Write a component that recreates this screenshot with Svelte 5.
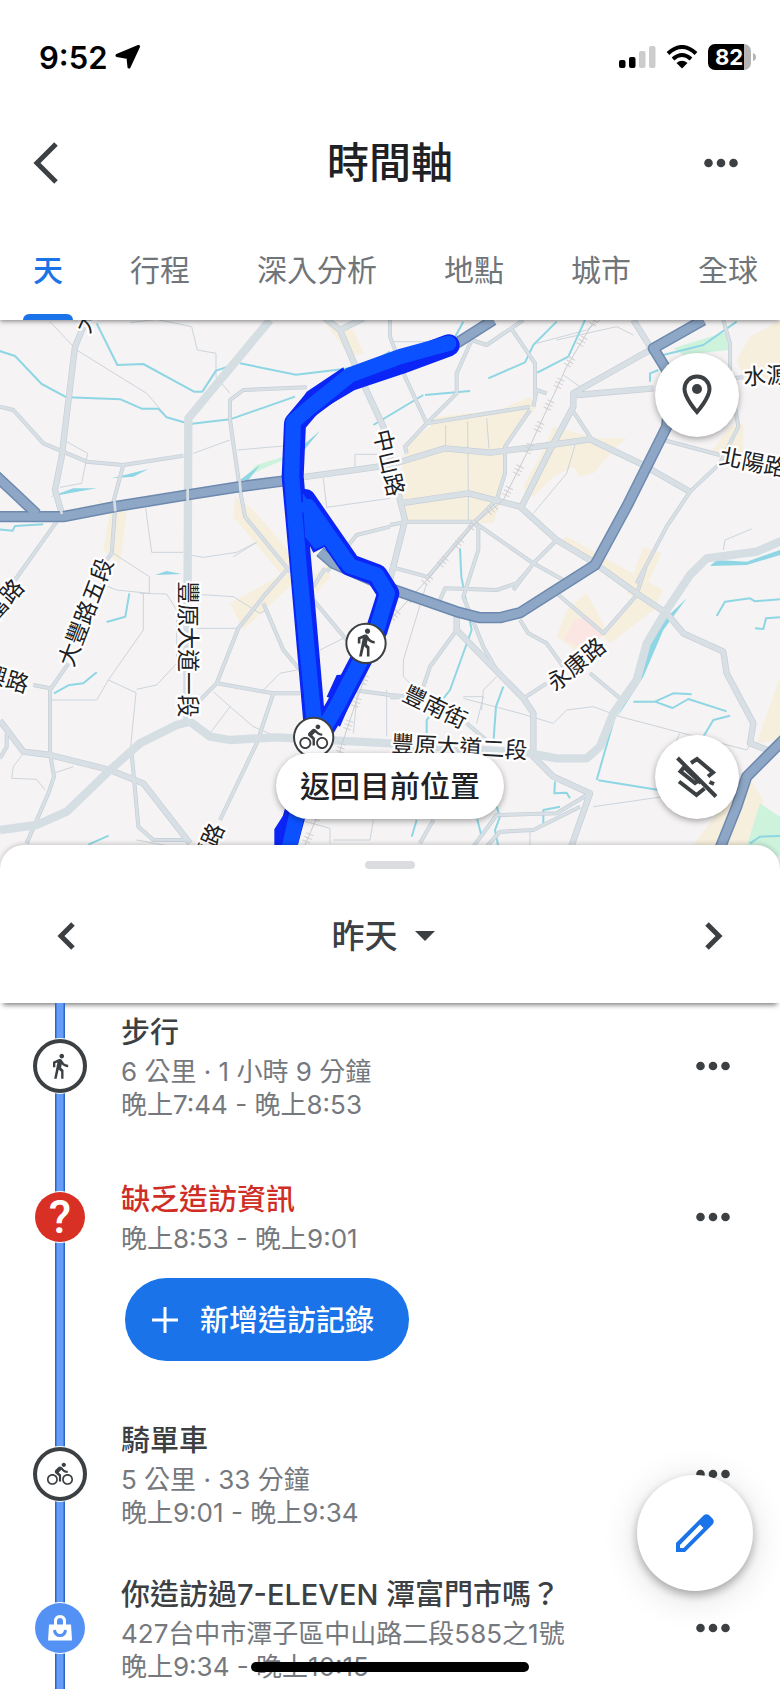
<script lang="ts">
	const tabs = ['天', '行程', '深入分析', '地點', '城市', '全球'];
	let activeTab = $state('天');

	type Entry = { kind: string; title: string; lines: string[] };

	const entries: Entry[] = [
		{ kind: 'walk', title: '步行', lines: ['6 公里 · 1 小時 9 分鐘', '晚上7:44 - 晚上8:53'] },
		{ kind: 'missing', title: '缺乏造訪資訊', lines: ['晚上8:53 - 晚上9:01'] },
		{ kind: 'bike', title: '騎單車', lines: ['5 公里 · 33 分鐘', '晚上9:01 - 晚上9:34'] },
		{
			kind: 'shop',
			title: '你造訪過7-ELEVEN 潭富門市嗎？',
			lines: ['427台中市潭子區中山路二段585之1號', '晚上9:34 - 晚上10:15']
		}
	];

	const walkIcon =
		'M13.5 5.5c1.1 0 2-.9 2-2s-.9-2-2-2-2 .9-2 2 .9 2 2 2zM9.8 8.9L7 23h2.1l1.8-8 2.1 2v6h2v-7.5l-2.1-2 .6-3C14.8 12 16.8 13 19 13v-2c-1.9 0-3.5-1-4.3-2.4l-1-1.6c-.4-.6-1-1-1.7-1-.3 0-.5.1-.8.1L6 8.3V13h2V9.6l1.8-.7';
	const bikeIcon =
		'M15.5 5.5c1.1 0 2-.9 2-2s-.9-2-2-2-2 .9-2 2 .9 2 2 2zM5 12c-2.8 0-5 2.2-5 5s2.2 5 5 5 5-2.2 5-5-2.2-5-5-5zm0 8.5c-1.9 0-3.5-1.6-3.5-3.5s1.6-3.5 3.5-3.5 3.5 1.6 3.5 3.5-1.6 3.5-3.5 3.5zm5.8-10l2.4-2.4.8.8c1.3 1.3 3 2.1 5.1 2.1V9c-1.5 0-2.7-.6-3.6-1.5l-1.9-1.9c-.5-.4-1-.6-1.6-.6s-1.1.2-1.4.6L7.8 8.4c-.4.4-.6.9-.6 1.4 0 .6.2 1.1.6 1.4L11 14v5h2v-6.2l-2.2-2.3zM19 12c-2.8 0-5 2.2-5 5s2.2 5 5 5 5-2.2 5-5-2.2-5-5-5zm0 8.5c-1.9 0-3.5-1.6-3.5-3.5s1.6-3.5 3.5-3.5 3.5 1.6 3.5 3.5-1.6 3.5-3.5 3.5z';

	// built-up areas
	const blocks = [
		'M1310 320L1500 300L1590 260L1610 290L1520 400L1500 580L1480 640L1220 640L1200 560L1210 440L1230 390L1290 350Z',
		'M1660 350L1790 385L1880 385L1840 420L1780 490L1740 500L1720 470L1660 500L1600 560L1570 530L1630 420Z',
		'M2250 80L2340 30V210L2230 200L2210 150Z',
		'M2190 350L2230 340V450L2180 460L2130 430Z',
		'M1700 900L1760 850L1820 960L1740 1030L1670 980Z',
		'M1700 680L1990 840L1960 900L1830 1000L1810 980L1920 850L1670 700Z',
		'M1930 710L1985 730L1920 870L1880 850Z',
		'M285 565L380 610L360 760L310 720L330 610Z',
		'M705 560L760 600L900 760L850 800L700 620Z',
		'M870 780L900 800L730 960L690 880Z',
		'M980 760L990 800L950 850L930 810Z',
		'M970 30L1060 60L1090 130L1050 140Z',
		'M2340 1100L2270 1300L2340 1290ZM2240 1390L2290 1470L2240 1620H2070Z'
	];

	const parks = [
		'M2020 115L2180 65L2185 120L2050 135Z',
		'M2280 1480L2340 1520V1640H2230Z',
		'M720 515L770 465L850 440L850 450L780 480Z'
	];

	const waters = [
		'M335 505L445 477L400 500ZM150 560L220 535L290 535ZM465 795L500 783L545 792ZM720 510L780 465L745 510ZM905 430L910 405L960 362Z',
		'M2130 768L2150 750L2240 755L2340 720V735L2240 765Z',
		'M2060 865L1990 960L1930 1100L1850 1225L1900 1130L1930 1010L1960 960Z'
	];

	const streams = [
		'M-10 120L45 138L125 222L200 262L362 268L425 296H475L500 322L570 342L690 328L885 260',
		'M290 40L352 165L430 162L582 245H607L648 182L700 165',
		'M720 160L888 194L1050 175L1110 160L1170 125',
		'M-10 658L38 662L45 648L130 643',
		'M388 850L376 920L320 936M162 1150L205 1126L250 1120L290 1087M265 1604L326 1577',
		'M1120 345L1170 315L1270 255M1275 255L1410 243',
		'M1465 205L1575 157L1600 105L1670 35M1612 188L1705 140L1755 30M1360 90L1390 35',
		'M1990 135L2110 105L2210 35M1950 215V190L1975 180',
		'M1380 715L1384 800L1415 960L1350 1140L1280 1230V1270',
		'M1510 1130L1488 1190L1480 1300',
		'M2150 918L2175 875L2250 865L2265 874L2340 868M2265 955L2290 957L2298 925L2340 922',
		'M1900 1175H1965L2020 1150L2075 1153M1965 1175L2018 1194L2065 1167L2180 1204M2110 1280L2140 1230L2190 1217',
		'M1840 1235L1790 1410M1795 1411L1990 1442M1665 1415L1663 1450L1700 1448L1710 1465',
		'M1630 1540V1500L1680 1490M1430 1520L1445 1580M1490 1490L1500 1520L1485 1560L1495 1610M1250 1530L1235 1580',
		'M2250 1600L2280 1580L2340 1578'
	];

	const lanes = [
		'M150 35L230 120L440 250L500 320M390 38L470 28L575 50L592 120L648 130V200L690 250',
		'M200 395L263 430L245 520L180 532M437 595L455 727H550M575 736L610 742L710 727L770 697L700 740',
		'M580 430L690 390M712 420L850 408M970 505L980 592L1170 565M1065 470V433H1170',
		'M340 730L448 800V850L350 840L300 820M430 850V960L325 1110L290 1170H150M420 850L500 852L530 900V1060L470 1125L410 1138',
		'M325 1110L408 1148L390 1330M575 852L700 860L780 910L800 900M590 955H715M640 1145L690 1190L760 1250L830 1280M690 1190L630 1270',
		'M70 1330L40 1370L35 1405L110 1408L135 1440M160 1390L220 1370M790 1140L840 1090L890 1080M960 1020L1030 985',
		'M1075 1120L1060 1270M1160 1140V1280M900 1530L990 1555V1600M1120 1530L1110 1590L1000 1590M410 1590L570 1620',
		'M1337 345V410M1403 335L1405 560M1460 325L1467 415M1405 560V635M1725 405L1700 490L1600 610M1690 195L1740 230',
		'M1170 95H1280M1610 100L1760 60L1800 30M2170 720L2175 690L2255 657M1670 90L1850 50L1900 75',
		'M1280 820L1210 1050L1210 1100L1240 1130M1390 1160H1450L1430 1240M1390 1165L1560 1210L1660 1240L1700 1200L1780 1190L1860 1220L2240 1320L2260 1290',
		'M1490 1100L1450 1140L1445 1200M1780 1490L1990 1460M1590 1560V1620M2040 1270L2020 1310'
	];

	const minorRoads = [
		'M0 290L40 300L130 400L260 455L370 465L550 437M370 465L340 575M345 600L335 730L320 750M170 635L45 810',
		'M920 232L730 240L690 270V330L720 540L735 620L870 785M1170 650L1070 675L980 785',
		'M205 1060L150 1140V1330L162 1400L145 1450L80 1600M100 1125L150 1135M20 1270V1310L0 1345',
		'M860 780L790 860L715 955L650 1120L590 1180M650 1120L820 1150L900 1150M1060 1140L1170 1155L1230 1160',
		'M790 880L850 1020L900 1080M820 1150L770 1300L660 1530M940 870L1040 990M975 775L940 830M395 1330L415 1550L460 1590H570',
		'M1280 340L1215 200L1170 80V30M1280 340L1370 250V190L1415 90L1460 105L1570 30M1530 50L1605 160V270',
		'M1590 290L1280 340L1215 410L1220 430M1590 300L1515 410V490L1490 570L1420 640L1280 805M1600 290L1610 240L1640 250',
		'M1220 635H1420L1600 760L1690 810M1170 645L1220 635M1600 760L1670 690M1600 760L1540 840M1435 650V720L1390 860L1450 1010L1490 1080',
		'M1170 770L1280 800M1720 305L1775 388M1990 390L2160 435M2170 30L2190 100V200L2215 350L2160 460L2070 545L2000 650L1910 820',
		'M1320 870L1335 835L1490 840L1550 820L1590 775M1560 930L1585 970L1640 1000L1690 1070M1670 850L1810 970L1910 855L1935 775',
		'M1770 1090L1860 1165M1570 1165L1640 1120M1370 960L1290 1070L1270 1130M1400 1240L1470 1300',
		'M1770 1450L1670 1510L1490 1515L1420 1610M1740 1490L1600 1560L1500 1565L1460 1610M1170 1162H1240M2190 205L2230 202',
		'M1300 1530L1260 1600'
	];

	const roads = [
		'M250 50L225 110L185 440L165 540L185 610',
		'M1020 60L1080 200L1150 350L1200 570L1215 630L1170 810M970 20L1020 60L1090 25',
		'M1200 580L1405 550L1560 590L1670 690L1770 750L1910 850L2000 910L2050 970L2170 1025L2180 1090L2260 1240L2250 1300L2330 1330',
		'M900 503L1170 465L1335 415L1470 428L1650 405L1770 388L1920 460L2070 545',
		'M1950 120L1720 250V290L1650 420L1565 590M1730 255L1960 235M1950 110L1900 30',
		'M1370 920V960L1570 1165L1600 1210V1340L1660 1400L1770 1450L1710 1620',
		'M0 1232L70 1325L150 1335L330 1380L430 1420L570 1600'
	];

	const mainRoads = [
		'M810 30L565 325L563 780L562 1230',
		'M0 1560L110 1545L200 1505L330 1380L420 1300L530 1245L570 1235L630 1280L690 1290L830 1282L1170 1300L1590 1330L1670 1345H1760L1800 1310L1840 1210L1910 1110L1940 1000L2000 900L2070 795L2120 745L2270 725L2350 690'
	];

	const highways = [
		'M-10 620H190L345 590L560 555L720 530L850 513',
		'M-20 490L55 560L110 612',
		'M960 725L1000 760L1170 835L1370 905L1440 923H1500L1560 908L1785 765L1880 590L2000 350L2010 250L2000 180L1960 115L2110 30',
		'M1370 100L1480 30',
		'M2360 1280L2240 1400L2210 1490L2150 1640'
	];

	const railway = 'M1790 20L1700 170L1640 300L1580 430L1510 570L1420 645L1290 800L1170 930L1120 1030L1060 1200L960 1500L900 1640';

	const labels = [
		{ text: '中山路', x: 1168, y: 458, angle: 77 },
		{ text: '豐原大道一段', x: 565, y: 1018, angle: 90 },
		{ text: '大豐路五段', x: 256, y: 906, angle: -69 },
		{ text: '富路', x: 12, y: 868, angle: -48 },
		{ text: '興路', x: 20, y: 1105, angle: 17 },
		{ text: '潭路', x: 624, y: 1605, angle: -66 },
		{ text: '大', x: 258, y: 32, angle: -65 },
		{ text: '水源路', x: 2332, y: 194, angle: -3 },
		{ text: '北陽路', x: 2260, y: 456, angle: 11 },
		{ text: '永康路', x: 1728, y: 1062, angle: -40 },
		{ text: '豐南街', x: 1306, y: 1190, angle: 26 },
		{ text: '豐原大道二段', x: 1378, y: 1310, angle: 3 }
	];
</script>

{#snippet dots()}
	<svg class="dots" viewBox="0 0 34 10" aria-hidden="true">
		<circle cx="4.5" cy="5" r="4.3" />
		<circle cx="17" cy="5" r="4.3" />
		<circle cx="29.5" cy="5" r="4.3" />
	</svg>
{/snippet}

<div class="screen">
	<header>
		<div class="status">
			<span class="time">
				9:52
				<svg width="25" height="24" viewBox="0 0 25 24"><path class="arrow" d="M23.500 1.500L14 22L13 12.500L2 10.500Z" /></svg>
			</span>
			<span class="signal">
				<svg width="37" height="24" viewBox="0 0 37 24">
					<rect x="0" y="15" width="6.500" height="8" rx="2" />
					<rect x="10" y="12" width="6.500" height="11" rx="2" />
					<rect class="off" x="20" y="6" width="6.500" height="17" rx="2" />
					<rect class="off" x="30" y="1" width="6.500" height="22" rx="2" />
				</svg>
				<svg width="32" height="24" viewBox="0 0 32 24">
					<path class="wave" d="M2 8.500Q16-4.500 30 8.500M7 14Q16 6 25 14" />
					<path d="M10.500 18Q16 13.500 21.500 18L16 23.500Z" />
				</svg>
				<svg width="48" height="26" viewBox="0 0 48 26">
					<path class="charge-rest" d="M35 0h1a7 7 0 0 1 7 7v12a7 7 0 0 1-7 7h-1zM45 9q3 1 3 4t-3 4z" />
					<path d="M7 0h29v26H7a7 7 0 0 1-7-7V7a7 7 0 0 1 7-7z" />
					<text x="21" y="21" text-anchor="middle">82</text>
				</svg>
			</span>
		</div>

		<div class="titlebar">
			<button aria-label="返回">
				<svg width="26" height="42" viewBox="0 0 26 42"><path class="chevron" d="M23 2L4 21L23 40" /></svg>
			</button>
			<h1>時間軸</h1>
			<button aria-label="更多">{@render dots()}</button>
		</div>

		<nav>
			{#each tabs as tab}
				<button class:active={tab === activeTab} onclick={() => (activeTab = tab)}>{tab}</button>
			{/each}
		</nav>
	</header>

	<section class="map">
		<svg class="canvas" viewBox="0 30 2340 1647" preserveAspectRatio="xMidYMin slice">
			{#each blocks as d}<path class="block" {d} />{/each}
			<path class="clinic" d="M1725 930L1765 915L1815 970L1760 1020L1690 990Z" />
			{#each parks as d}<path class="park" {d} />{/each}
			{#each waters as d}<path class="water" {d} />{/each}
			{#each lanes as d}<path class="lane" {d} />{/each}
			{#each streams as d}<path class="stream" {d} />{/each}
			{#each minorRoads as d}<path class="minor edge" {d} />{/each}
			{#each roads as d}<path class="road edge" {d} />{/each}
			{#each minorRoads as d}<path class="minor" {d} />{/each}
			{#each roads as d}<path class="road" {d} />{/each}
			{#each mainRoads as d}<path class="main" {d} />{/each}
			<path class="rail" d={railway} />
			<path class="ties" d={railway} />
			{#each highways as d}<path class="highway edge" {d} />{/each}
			{#each highways as d}<path class="highway" {d} />{/each}
			<path class="bridge" d="M563 530V590M719 512L722 548M343 570L346 604M178 585L186 612" />

			<path class="route edge" d="M1346 106L1200 160L1050 210L940 275L885 340L878 500L905 800L945 1260M915 570L1050 765L1130 795L1165 850L1130 960L1010 1190L950 1290M893 1480L850 1640" />
			<path class="shade" d="M1030 172L920 245L885 300L930 330L1050 240ZM915 680L940 728L975 710L1000 740L980 640ZM1010 1095L980 1160L993 1165L975 1220L1020 1250L1090 1090ZM860 1500L823 1558V1640H890L900 1500Z" />
			<path class="route-fill" d="M908 550L1050 740L1020 770L975 705L945 718L915 680Z" />
			<path class="route" d="M1346 100L1200 140L1050 195L920 300L880 335L875 500L900 800L945 1260M925 590L1050 768L1130 795L1162 850L1130 960L1010 1190L950 1290M898 1480L862 1640" />

			{#each labels as label}
				<text class="place" x={label.x} y={label.y} transform="rotate({label.angle} {label.x} {label.y})">{label.text}</text>
			{/each}

			<circle class="pin" cx="1098" cy="1000" r="59" />
			<path class="glyph" transform="translate(1050 950) scale(3.9)" d={walkIcon} />
			<circle class="pin" cx="941" cy="1282" r="59" />
			<path class="glyph" transform="translate(898 1238) scale(3.6)" d={bikeIcon} />
		</svg>

		<button class="round places" aria-label="地點">
			<svg width="30" height="42" viewBox="0 0 30 42">
				<path class="outline" d="M15 2.500C8 2.500 2.500 8 2.500 15C2.500 24 15 38 15 38S27.500 24 27.500 15C27.500 8 22 2.500 15 2.500Z" />
				<circle cx="15" cy="15" r="5" />
			</svg>
		</button>
		<button class="return">返回目前位置</button>
		<button class="round layers" aria-label="圖層">
			<svg width="42" height="42" viewBox="0 0 42 42">
				<path class="outline" d="M1.500 2L40 40.500M15 7L21 3L37 16.500L32 20.500M9 10L4.500 15.500L19 27L24 23.500M3 25.500L20.500 39L28.500 32.500M33.500 26L38 28" />
				<path class="outline" d="M9 12L25 27" />
			</svg>
		</button>
	</section>

	<main>
		<div class="sheet-head">
			<span class="grabber"></span>
			<div class="day">
				<button aria-label="前一天">
					<svg width="18" height="28" viewBox="0 0 18 28"><path class="chevron" d="M16 2L4 14L16 26" /></svg>
				</button>
				<button class="date">
					<span>昨天</span>
					<svg width="20" height="10" viewBox="0 0 20 10"><path d="M0 0H20L10 10Z" /></svg>
				</button>
				<button aria-label="後一天">
					<svg width="18" height="28" viewBox="0 0 18 28"><path class="chevron" d="M2 2L14 14L2 26" /></svg>
				</button>
			</div>
		</div>

		<ul>
			{#each entries as entry}
				<li class={entry.kind}>
					<div class="row">
						<span class="badge">
							{#if entry.kind === 'walk'}
								<svg width="28" height="28" viewBox="0 0 24 24"><path d={walkIcon} /></svg>
							{:else if entry.kind === 'bike'}
								<svg width="26" height="26" viewBox="0 0 24 24"><path d={bikeIcon} /></svg>
							{:else if entry.kind === 'shop'}
								<svg width="26" height="26" viewBox="0 0 26 26">
									<path d="M2 9.500H24L25 25.500H1Z" />
									<path class="handle" d="M8.500 11V6.500Q8.500 1.500 13 1.500T17.500 6.500V11" />
									<path class="smile" d="M7.500 15Q8 20.500 13 20.500T18.500 15" />
								</svg>
							{:else}
								?
							{/if}
						</span>
						<div class="info">
							<h2>{entry.title}</h2>
							{#each entry.lines as line}
								<p>{line}</p>
							{/each}
						</div>
						<button class="more" aria-label="更多">{@render dots()}</button>
					</div>
					{#if entry.kind === 'missing'}
						<button class="add">
							<svg width="26" height="26" viewBox="0 0 26 26"><path d="M13 0V26M0 13H26" /></svg>
							<span>新增造訪記錄</span>
						</button>
					{/if}
				</li>
			{/each}
		</ul>
	</main>

	<button class="edit" aria-label="編輯">
		<svg width="38" height="38" viewBox="0 0 38 38">
			<path fill-rule="evenodd" d="M0 29L27.500 1.500Q30.500-1 33.500 1.500L36.500 4.500Q39 7.500 36.500 10.500L9 38H0ZM4 31V34H7.500L27.500 14L24 10.500Z" />
		</svg>
	</button>
	<span class="home"></span>
</div>

<style>
	:global(body) {
		margin: 0;
		background: #fff;
	}
	.screen {
		position: relative;
		min-height: 100vh;
		overflow: hidden;
		font-family: Inter, 'Noto Sans CJK TC', sans-serif;
		color: #3c4043;
	}
	button {
		display: flex;
		align-items: center;
		justify-content: center;
		padding: 0;
		border: 0;
		background: none;
		color: inherit;
		font: inherit;
		cursor: pointer;
	}
	svg {
		display: block;
		fill: currentColor;
	}
	h1,
	h2,
	p,
	ul {
		margin: 0;
		padding: 0;
	}
	.dots {
		width: 34px;
		height: 10px;
	}
	.chevron {
		fill: none;
		stroke: currentColor;
		stroke-width: 5;
	}

	header {
		position: relative;
		z-index: 1;
		background: #fff;
		box-shadow: 0 1px 5px rgba(0, 0, 0, 0.5);
	}
	.status {
		display: flex;
		align-items: center;
		justify-content: space-between;
		height: 114px;
		padding: 0 24px 0 39px;
		color: #000;
	}
	.time {
		display: flex;
		align-items: center;
		gap: 7px;
		font-size: 31px;
		font-weight: 600;
	}
	.arrow {
		stroke: #000;
		stroke-width: 3;
		stroke-linejoin: round;
	}
	.signal {
		display: flex;
		align-items: center;
		gap: 10px;
	}
	.signal .off {
		fill: #ccc;
	}
	.signal .wave {
		fill: none;
		stroke: #000;
		stroke-width: 4;
	}
	.signal .charge-rest {
		fill: #b4b4b4;
	}
	.signal text {
		fill: #fff;
		font-size: 22px;
		font-weight: 700;
	}
	.titlebar {
		display: grid;
		grid-template-columns: 1fr auto 1fr;
		align-items: center;
		height: 98px;
		padding: 0 42px 0 33px;
	}
	.titlebar button {
		justify-self: start;
	}
	.titlebar button:last-child {
		justify-self: end;
	}
	h1 {
		padding-left: 9px;
		color: #202124;
		font-size: 42px;
		font-weight: 500;
		line-height: 60px;
	}
	nav {
		display: flex;
		gap: 67px;
		height: 108px;
		padding-left: 33px;
		overflow: hidden;
	}
	nav button {
		position: relative;
		flex: none;
		padding-top: 4px;
		color: #70757a;
		font-size: 30px;
	}
	nav .active {
		color: #1a73e8;
		font-weight: 500;
	}
	nav .active::after {
		content: '';
		position: absolute;
		bottom: 0;
		left: -10px;
		right: -10px;
		height: 6px;
		border-radius: 6px 6px 0 0;
		background: #1a73e8;
	}

	.map {
		position: relative;
		height: 549px;
		background: #f5f3f4;
	}
	.canvas {
		width: 100%;
		height: 100%;
	}
	.canvas path {
		fill: none;
		stroke-linejoin: round;
	}
	.canvas .block {
		fill: #f7efdd;
	}
	.canvas .clinic {
		fill: #fbe6e4;
	}
	.canvas .park {
		fill: #cdf3dc;
	}
	.canvas .water {
		fill: #8fd6e4;
	}
	.lane {
		stroke: #ccd5db;
		stroke-width: 3;
	}
	.stream {
		stroke: #8fd6e4;
		stroke-width: 6;
	}
	.minor {
		stroke: #d8e0e5;
		stroke-width: 8;
	}
	.minor.edge {
		stroke: #c5cfd7;
		stroke-width: 12;
	}
	.road {
		stroke: #d8e0e5;
		stroke-width: 15;
	}
	.road.edge {
		stroke: #c5cfd7;
		stroke-width: 19;
	}
	.main {
		stroke: #d5dee3;
		stroke-width: 25;
	}
	.rail {
		stroke: #c9ccd0;
		stroke-width: 3;
	}
	.ties {
		stroke: #d0d0d3;
		stroke-width: 24;
		stroke-dasharray: 3 9 3 9 3 45;
	}
	.highway {
		stroke: #8ea7c6;
		stroke-width: 25;
	}
	.highway.edge {
		stroke: #6d89ae;
		stroke-width: 34;
	}
	.bridge {
		stroke: #d5dee3;
		stroke-width: 8;
	}
	.route {
		stroke: #0b51ff;
		stroke-width: 46;
		stroke-linecap: round;
	}
	.route.edge {
		stroke: #0a25f5;
		stroke-width: 66;
	}
	.canvas .shade {
		fill: #0a25f5;
	}
	.canvas .route-fill {
		fill: #0b51ff;
	}
	.place {
		fill: #202124;
		stroke: #fff;
		stroke-width: 14;
		stroke-linejoin: round;
		paint-order: stroke;
		font-size: 68px;
		text-anchor: middle;
		dominant-baseline: central;
	}
	.pin {
		fill: #fff;
		stroke: #3c4043;
		stroke-width: 6;
	}
	.canvas .glyph {
		fill: #3c4043;
	}
	.round {
		position: absolute;
		right: 41px;
		width: 84px;
		height: 84px;
		border-radius: 50%;
		background: #fff;
		box-shadow: 0 2px 6px rgba(0, 0, 0, 0.35);
	}
	.round .outline {
		fill: none;
		stroke: currentColor;
		stroke-width: 4;
	}
	.places {
		top: 33px;
	}
	.layers {
		bottom: 50px;
	}
	.return {
		position: absolute;
		bottom: 50px;
		left: 50%;
		height: 66px;
		padding: 0 24px 4px;
		border-radius: 33px;
		background: #fff;
		box-shadow: 0 2px 6px rgba(0, 0, 0, 0.35);
		color: #202124;
		font-size: 30px;
		font-weight: 500;
		transform: translateX(-50%);
	}

	main {
		position: relative;
		margin-top: -24px;
		border-radius: 24px 24px 0 0;
		background: #fff;
		box-shadow: 0 -1px 5px rgba(0, 0, 0, 0.2);
	}
	.sheet-head {
		display: flex;
		flex-direction: column;
		align-items: center;
		height: 158px;
		border-radius: 24px 24px 0 0;
		box-shadow: 0 5px 5px -3px rgba(0, 0, 0, 0.5);
	}
	.grabber {
		width: 50px;
		height: 8px;
		margin-top: 16px;
		border-radius: 4px;
		background: #dadce0;
	}
	.day {
		display: flex;
		align-items: center;
		justify-content: space-between;
		align-self: stretch;
		height: 134px;
		padding: 0 57px;
	}
	.date {
		gap: 17px;
		padding-right: 14px;
		font-size: 33px;
		font-weight: 500;
	}
	.date span,
	.add span {
		padding-bottom: 4px;
	}

	ul {
		list-style: none;
	}
	li {
		padding: 6px 0 34px;
		/* timeline rail, darker on both sides */
		background: linear-gradient(90deg, #2b66c8 1px, #669df6 2px, #669df6 8px, #2b66c8 9px) 55px 0 / 10px 100% no-repeat;
	}
	li.missing {
		padding: 19px 0 50px;
	}
	li:last-child {
		padding-bottom: 4px;
	}
	.row {
		display: grid;
		grid-template-columns: 120px 1fr 134px;
		align-items: center;
	}
	.badge {
		display: flex;
		align-items: center;
		justify-content: center;
		justify-self: center;
		box-sizing: border-box;
		width: 54px;
		height: 54px;
		border: 4px solid #3c4043;
		border-radius: 50%;
		background: #fff;
		box-shadow: 0 0 0 1px #fff;
	}
	.missing .badge,
	.shop .badge {
		width: 50px;
		height: 50px;
		border: 0;
		background: #5491f5;
		color: #fff;
	}
	.missing .badge {
		background: #d93025;
		font-family: Roboto, sans-serif;
		font-size: 46px;
		font-weight: 500;
	}
	.handle,
	.smile {
		fill: none;
		stroke: #fff;
		stroke-width: 3;
	}
	.smile {
		stroke: #5491f5;
	}
	.info {
		padding: 2px 0 2px 1px;
		white-space: nowrap;
	}
	h2 {
		font-size: 29px;
		font-weight: 500;
		line-height: 44px;
	}
	.missing h2 {
		color: #cf2e26;
	}
	p {
		color: #75797e;
		font-size: 26px;
		line-height: 33px;
	}
	.more {
		justify-self: center;
	}
	.add {
		gap: 22px;
		height: 83px;
		margin: 21px 0 0 125px;
		padding: 0 35px 0 27px;
		border-radius: 42px;
		background: #1a73e8;
		color: #fff;
		font-size: 29px;
		font-weight: 500;
	}
	.add svg {
		stroke: #fff;
		stroke-width: 3;
	}

	.edit {
		position: fixed;
		right: 27px;
		bottom: 98px;
		width: 116px;
		height: 116px;
		border-radius: 50%;
		background: #fff;
		box-shadow: 0 4px 10px rgba(0, 0, 0, 0.3), 0 6px 36px rgba(0, 0, 0, 0.14);
		color: #1a73e8;
	}
	.home {
		position: fixed;
		bottom: 17px;
		left: 50%;
		width: 278px;
		height: 10px;
		border-radius: 5px;
		background: #000;
		transform: translateX(-50%);
	}
</style>
